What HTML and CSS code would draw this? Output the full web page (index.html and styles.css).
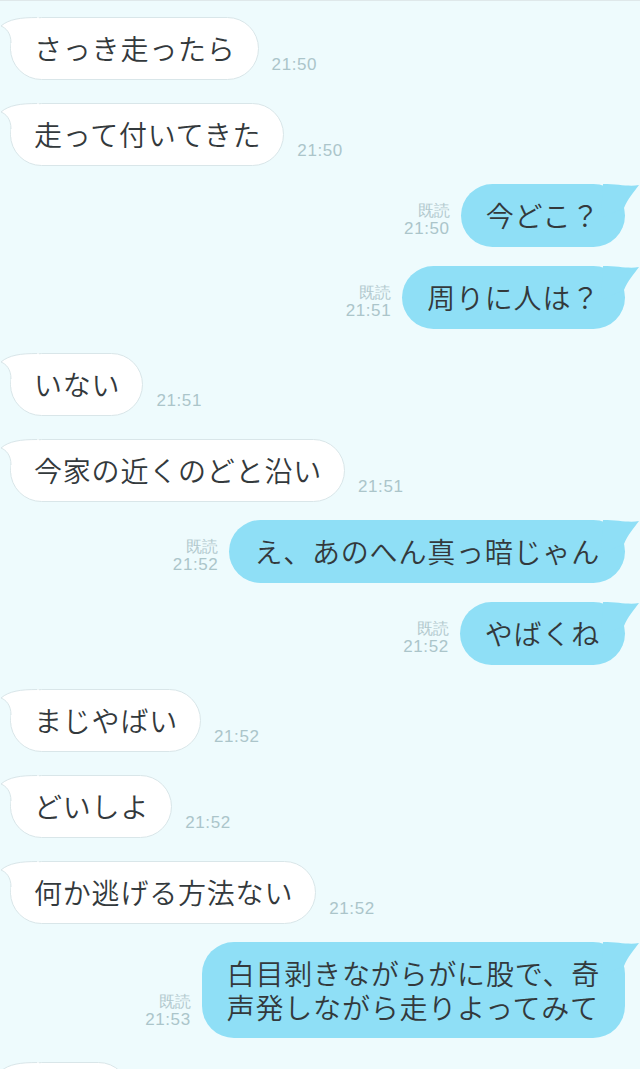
FILE: index.html
```html
<!DOCTYPE html>
<html lang="ja">
<head>
<meta charset="utf-8">
<title>Chat</title>
<link rel="stylesheet" href="styles.css">
</head>
<body>
<div class="chat">
  <div class="row in">
    <div class="bubble"><svg class="tail" width="40" height="36" viewBox="0 0 40 36"><path class="tf" d="M38,0.5 C22,0.5 10,2 2,9 C7,11 12,16 12,26 L12,34 L26,34 L40,6 L40,0.5 Z"/><path class="ts" d="M38,0.5 C22,0.5 10,2 2,9 C7,11 12,16 12,26"/></svg><span class="txt">さっき走ったら</span></div>
    <span class="time">21:50</span>
  </div>
  <div class="row in">
    <div class="bubble"><svg class="tail" width="40" height="36" viewBox="0 0 40 36"><path class="tf" d="M38,0.5 C22,0.5 10,2 2,9 C7,11 12,16 12,26 L12,34 L26,34 L40,6 L40,0.5 Z"/><path class="ts" d="M38,0.5 C22,0.5 10,2 2,9 C7,11 12,16 12,26"/></svg><span class="txt">走って付いてきた</span></div>
    <span class="time">21:50</span>
  </div>
  <div class="row out">
    <div class="meta"><span>既読</span><span class="mt">21:50</span></div>
    <div class="bubble"><svg class="tail" width="40" height="36" viewBox="0 0 40 36"><path d="M2,0 C18,0 28,3 38,1 C33,8 27,14 23,24 L0,34 Z"/></svg><span class="txt">今どこ？</span></div>
  </div>
  <div class="row out">
    <div class="meta"><span>既読</span><span class="mt">21:51</span></div>
    <div class="bubble"><svg class="tail" width="40" height="36" viewBox="0 0 40 36"><path d="M2,0 C18,0 28,3 38,1 C33,8 27,14 23,24 L0,34 Z"/></svg><span class="txt">周りに人は？</span></div>
  </div>
  <div class="row in">
    <div class="bubble"><svg class="tail" width="40" height="36" viewBox="0 0 40 36"><path class="tf" d="M38,0.5 C22,0.5 10,2 2,9 C7,11 12,16 12,26 L12,34 L26,34 L40,6 L40,0.5 Z"/><path class="ts" d="M38,0.5 C22,0.5 10,2 2,9 C7,11 12,16 12,26"/></svg><span class="txt">いない</span></div>
    <span class="time">21:51</span>
  </div>
  <div class="row in">
    <div class="bubble"><svg class="tail" width="40" height="36" viewBox="0 0 40 36"><path class="tf" d="M38,0.5 C22,0.5 10,2 2,9 C7,11 12,16 12,26 L12,34 L26,34 L40,6 L40,0.5 Z"/><path class="ts" d="M38,0.5 C22,0.5 10,2 2,9 C7,11 12,16 12,26"/></svg><span class="txt">今家の近くのどと沿い</span></div>
    <span class="time">21:51</span>
  </div>
  <div class="row out">
    <div class="meta"><span>既読</span><span class="mt">21:52</span></div>
    <div class="bubble"><svg class="tail" width="40" height="36" viewBox="0 0 40 36"><path d="M2,0 C18,0 28,3 38,1 C33,8 27,14 23,24 L0,34 Z"/></svg><span class="txt">え、あのへん真っ暗じゃん</span></div>
  </div>
  <div class="row out">
    <div class="meta"><span>既読</span><span class="mt">21:52</span></div>
    <div class="bubble"><svg class="tail" width="40" height="36" viewBox="0 0 40 36"><path d="M2,0 C18,0 28,3 38,1 C33,8 27,14 23,24 L0,34 Z"/></svg><span class="txt">やばくね</span></div>
  </div>
  <div class="row in">
    <div class="bubble"><svg class="tail" width="40" height="36" viewBox="0 0 40 36"><path class="tf" d="M38,0.5 C22,0.5 10,2 2,9 C7,11 12,16 12,26 L12,34 L26,34 L40,6 L40,0.5 Z"/><path class="ts" d="M38,0.5 C22,0.5 10,2 2,9 C7,11 12,16 12,26"/></svg><span class="txt">まじやばい</span></div>
    <span class="time">21:52</span>
  </div>
  <div class="row in">
    <div class="bubble"><svg class="tail" width="40" height="36" viewBox="0 0 40 36"><path class="tf" d="M38,0.5 C22,0.5 10,2 2,9 C7,11 12,16 12,26 L12,34 L26,34 L40,6 L40,0.5 Z"/><path class="ts" d="M38,0.5 C22,0.5 10,2 2,9 C7,11 12,16 12,26"/></svg><span class="txt">どいしよ</span></div>
    <span class="time">21:52</span>
  </div>
  <div class="row in">
    <div class="bubble"><svg class="tail" width="40" height="36" viewBox="0 0 40 36"><path class="tf" d="M38,0.5 C22,0.5 10,2 2,9 C7,11 12,16 12,26 L12,34 L26,34 L40,6 L40,0.5 Z"/><path class="ts" d="M38,0.5 C22,0.5 10,2 2,9 C7,11 12,16 12,26"/></svg><span class="txt">何か逃げる方法ない</span></div>
    <span class="time">21:52</span>
  </div>
  <div class="row out">
    <div class="meta"><span>既読</span><span class="mt">21:53</span></div>
    <div class="bubble multi"><svg class="tail" width="40" height="36" viewBox="0 0 40 36"><path d="M2,0 C18,0 28,3 38,1 C33,8 27,14 23,24 L0,34 Z"/></svg><span class="line">白目剥きながらがに股で、奇</span><span class="line">声発しながら走りよってみて</span></div>
  </div>
  <div class="row in">
    <div class="bubble stub" aria-hidden="true"><svg class="tail" width="40" height="36" viewBox="0 0 40 36"><path class="tf" d="M38,0.5 C22,0.5 10,2 2,9 C7,11 12,16 12,26 L12,34 L26,34 L40,6 L40,0.5 Z"/><path class="ts" d="M38,0.5 C22,0.5 10,2 2,9 C7,11 12,16 12,26"/></svg></div>
  </div>
</div>
</body>
</html>
```

FILE: styles.css
```css
html, body {
  margin: 0;
  padding: 0;
  height: 1069px;
  overflow: hidden;
  background: #eefbfd;
}

.chat {
  border-top: 1px solid #dfe8ea;
  padding-top: 16px;
  display: flex;
  flex-direction: column;
}

.row {
  display: flex;
  align-items: flex-end;
}

.row.in {
  padding-left: 10px;
  justify-content: flex-start;
}

.row.out {
  padding-right: 15px;
  justify-content: flex-end;
}

.in + .in { margin-top: 23px; }
.out + .out { margin-top: 19px; }
.in + .out { margin-top: 18px; }
.out + .in { margin-top: 24px; }

.bubble {
  position: relative;
  box-sizing: border-box;
  min-height: 63px;
  padding: 14px 25px 14px 25px;
  border-radius: 32px;
  font-family: "Noto Sans CJK JP", "Noto Sans", sans-serif;
  font-weight: 350;
  font-size: 28px;
  letter-spacing: 0.8px;
  line-height: 35px;
  color: #33393c;
  white-space: nowrap;
}

.bubble .txt,
.bubble .line {
  position: relative;
  z-index: 1;
}

.bubble.multi {
  display: flex;
  flex-direction: column;
  gap: 0;
  line-height: 34px;
  padding-top: 14px;
  padding-bottom: 14px;
}

.in .bubble {
  background: #ffffff;
  border: 1px solid #d9e6e9;
  padding: 13px 22px 13px 23px;
}

.out .bubble {
  background: #8fdff6;
}

.bubble.stub {
  width: 120px;
}

.tail {
  position: absolute;
  top: -1px;
  display: block;
  overflow: visible;
}

.in .tail {
  left: -12px;
}

.in .tail .tf {
  fill: #ffffff;
}

.in .tail .ts {
  fill: none;
  stroke: #d9e6e9;
  stroke-width: 1;
}

.out .tail {
  top: 0;
  right: -16px;
}

.out .tail path {
  fill: #8fdff6;
}

.time {
  font-family: "Liberation Sans", Arial, sans-serif;
  font-size: 17px;
  letter-spacing: 0.6px;
  line-height: 18px;
  color: #abc5ca;
  margin-left: 13px;
  margin-bottom: 6px;
}

.meta {
  display: flex;
  flex-direction: column;
  align-items: flex-end;
  font-family: "Liberation Sans", Arial, sans-serif;
  color: #b2c9ce;
  margin-right: 11px;
  margin-bottom: 9px;
}

.meta span {
  font-size: 16px;
  line-height: 18px;
}

.meta .mt {
  font-size: 17px;
  letter-spacing: 0.6px;
  line-height: 18px;
  color: #abc5ca;
}
```
